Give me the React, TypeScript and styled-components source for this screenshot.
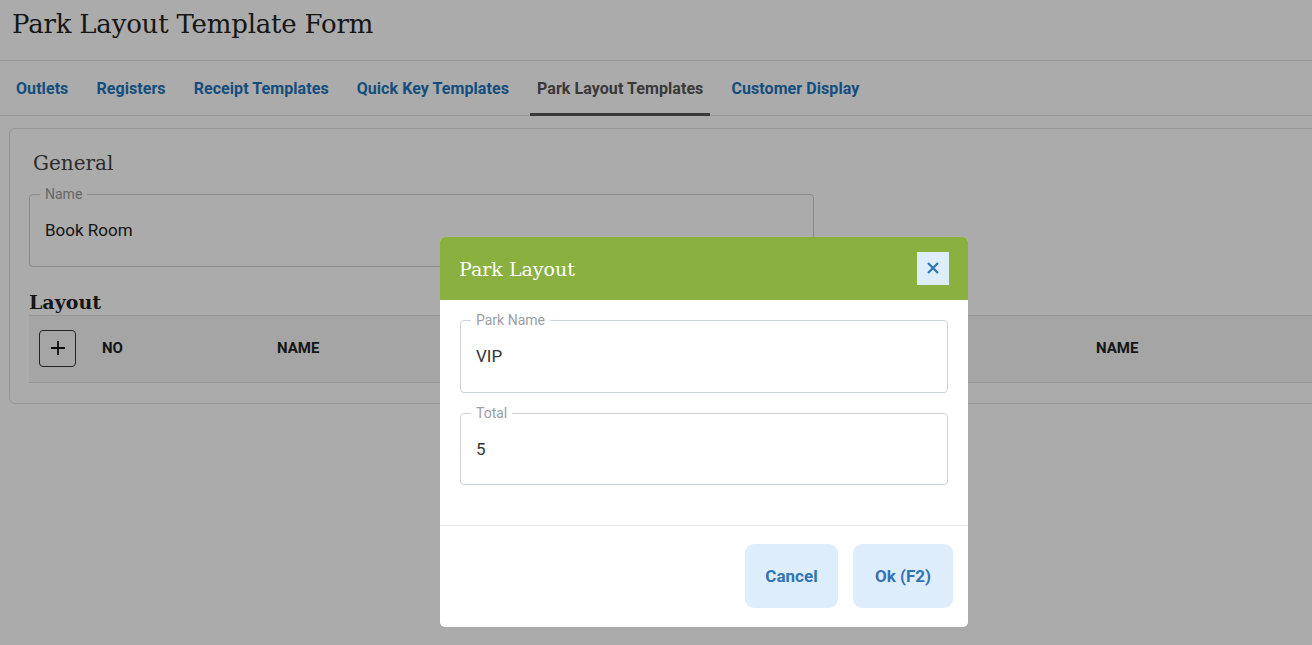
import React, { FC } from 'react';
import styled, { createGlobalStyle } from 'styled-components';

const palette = {
  text: '#333333',
  link: '#1b75bb',
  border: '#dedede',
  green: '#8ab040',
  softBlue: '#deedfb',
  blue: '#2f74b5',
  fieldBorder: '#cdd3da',
  label: '#9aa0a6',
};

const GlobalStyle = createGlobalStyle`
  html, body {
    margin: 0;
    padding: 0;
    background: #ffffff;
    overflow: hidden;
  }
  body {
    font-family: Roboto, 'Liberation Sans', sans-serif;
    color: ${palette.text};
  }
  * {
    box-sizing: border-box;
  }
`;

const tabs = ['Outlets', 'Registers', 'Receipt Templates', 'Quick Key Templates', 'Park Layout Templates', 'Customer Display'];

const App: FC = () => {
  return (
    <>
      <GlobalStyle />
      <Page>
        <TitleBar>
          <PageTitle>Park Layout Template Form</PageTitle>
        </TitleBar>
        <TabBar>
          {tabs.map((tab) => (
            <Tab key={tab} active={tab === 'Park Layout Templates'}>
              {tab}
            </Tab>
          ))}
        </TabBar>
        <Card>
          <SectionTitle>General</SectionTitle>
          <Field width="785px">
            <Legend>Name</Legend>
            <FieldValue>Book Room</FieldValue>
          </Field>
          <LayoutTitle>Layout</LayoutTitle>
          <TableHead>
            <AddCell>
              <AddButton>
                <svg width="18" height="18" viewBox="0 0 18 18">
                  <path d="M9 2v14M2 9h14" stroke="#111" strokeWidth="1.8" />
                </svg>
              </AddButton>
            </AddCell>
            <HeadCell width="175px">NO</HeadCell>
            <HeadCell width="819px">NAME</HeadCell>
            <HeadCell width="200px">NAME</HeadCell>
          </TableHead>
        </Card>
      </Page>

      <Overlay>
        <Modal>
          <ModalHeader>
            <ModalTitle>Park Layout</ModalTitle>
            <CloseButton>
              <svg width="14" height="14" viewBox="0 0 14 14">
                <path d="M2 2l10 10M12 2L2 12" stroke={palette.blue} strokeWidth="2.2" />
              </svg>
            </CloseButton>
          </ModalHeader>
          <ModalBody>
            <Field modal>
              <Legend modal>Park Name</Legend>
              <FieldValue modal>VIP</FieldValue>
            </Field>
            <Field modal>
              <Legend modal>Total</Legend>
              <FieldValue modal short>5</FieldValue>
            </Field>
          </ModalBody>
          <ModalFooter>
            <SoftButton width="93px">Cancel</SoftButton>
            <SoftButton width="100px">Ok (F2)</SoftButton>
          </ModalFooter>
        </Modal>
      </Overlay>
    </>
  );
};

const Page = styled.div`
  width: 1360px;
  min-height: 645px;
`;

const TitleBar = styled.header`
  height: 61px;
  display: flex;
  align-items: center;
  padding: 0 12px 12px;
  border-bottom: 1px solid ${palette.border};
`;

const PageTitle = styled.h1`
  margin: 0;
  font-family: 'DejaVu Serif', 'Liberation Serif', serif;
  font-weight: 400;
  font-size: 26px;
  letter-spacing: -0.2px;
  color: #222;
`;

const TabBar = styled.nav`
  height: 55px;
  display: flex;
  align-items: stretch;
  gap: 14px;
  padding-left: 9px;
  border-bottom: 1px solid ${palette.border};
`;

const Tab = styled.a<{ active?: boolean }>`
  display: flex;
  align-items: center;
  padding: 3px 7px 0;
  font-size: 16px;
  font-weight: 700;
  letter-spacing: 0.07px;
  cursor: pointer;
  color: ${(p) => (p.active ? '#555' : palette.link)};
  border-bottom: 3px solid ${(p) => (p.active ? '#555' : 'transparent')};
  margin-bottom: -1px;
`;

const Card = styled.section`
  margin: 12px 0 0 9px;
  width: 1340px;
  padding: 19px 19px 20px;
  border: 1px solid ${palette.border};
  border-radius: 6px;
`;

const SectionTitle = styled.h2`
  margin: 0 0 8px 4px;
  font-family: 'DejaVu Serif', 'Liberation Serif', serif;
  font-weight: 400;
  font-size: 20px;
  line-height: 30px;
  color: #444;
`;

const Field = styled.fieldset<{ width?: string; modal?: boolean }>`
  margin: 0 0 ${(p) => (p.modal ? '12px' : '22px')};
  padding: 0 15px 8px;
  width: ${(p) => p.width || '100%'};
  border: 1px solid ${(p) => (p.modal ? palette.fieldBorder : '#d0d0d0')};
  border-radius: 4px;

  &:last-child {
    margin-bottom: 0;
  }
`;

const Legend = styled.legend<{ modal?: boolean }>`
  padding: 0 5px;
  margin-left: -5px;
  font-size: 14px;
  line-height: 16px;
  color: ${(p) => (p.modal ? palette.label : '#999')};
`;

const FieldValue = styled.div<{ modal?: boolean; short?: boolean }>`
  height: ${(p) => (p.short ? '55px' : '56px')};
  display: flex;
  align-items: center;
  font-size: 17px;
  color: ${(p) => (p.modal ? '#333' : '#222')};
`;

const LayoutTitle = styled.h3`
  margin: 0;
  font-family: 'DejaVu Serif', 'Liberation Serif', serif;
  font-weight: 700;
  font-size: 19px;
  line-height: 26px;
  color: #222;
`;

const TableHead = styled.div`
  display: flex;
  align-items: center;
  height: 68px;
  padding-bottom: 2px;
  background: #f7f7f7;
  border-top: 1px solid #e0e0e0;
  border-bottom: 1px solid #e0e0e0;
`;

const AddCell = styled.div`
  width: 73px;
  padding-left: 10px;
`;

const AddButton = styled.button`
  width: 37px;
  height: 37px;
  display: flex;
  align-items: center;
  justify-content: center;
  padding: 0;
  background: transparent;
  border: 1px solid #333;
  border-radius: 4px;
`;

const HeadCell = styled.div<{ width: string }>`
  width: ${(p) => p.width};
  flex-shrink: 0;
  font-size: 15px;
  font-weight: 700;
  color: #222;
`;

const Overlay = styled.div`
  position: fixed;
  inset: 0;
  background: rgba(0, 0, 0, 0.33);
  display: flex;
  align-items: flex-start;
  padding: 237px 0 0 440px;
`;

const Modal = styled.div`
  width: 528px;
  background: #ffffff;
  border-radius: 5px;
  overflow: hidden;
`;

const ModalHeader = styled.div`
  height: 63px;
  display: flex;
  align-items: center;
  justify-content: space-between;
  padding: 0 19px;
  background: ${palette.green};
`;

const ModalTitle = styled.h2`
  margin: 0;
  font-family: 'DejaVu Serif', 'Liberation Serif', serif;
  font-weight: 400;
  font-size: 19px;
  color: #ffffff;
`;

const CloseButton = styled.button`
  width: 32px;
  height: 33px;
  margin-top: -1px;
  display: flex;
  align-items: center;
  justify-content: center;
  padding: 0;
  border: none;
  background: ${palette.softBlue};
`;

const ModalBody = styled.div`
  padding: 12px 20px 40px;
  border-bottom: 1px solid #e4e4e4;
`;

const ModalFooter = styled.div`
  display: flex;
  justify-content: flex-end;
  gap: 15px;
  padding: 18px 15px 19px;
`;

const SoftButton = styled.button<{ width: string }>`
  width: ${(p) => p.width};
  height: 64px;
  border: none;
  border-radius: 9px;
  background: ${palette.softBlue};
  color: ${palette.blue};
  font-family: Roboto, 'Liberation Sans', sans-serif;
  font-size: 17px;
  font-weight: 700;
`;

export default App;
